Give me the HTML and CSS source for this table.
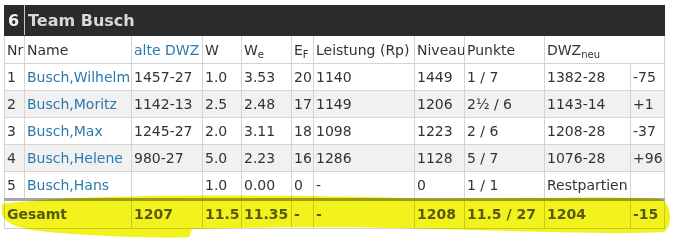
FILE: index.html
```html
<!DOCTYPE html>
<html lang="de">
<head>
<meta charset="utf-8">
<title>Team Busch</title>
<link rel="stylesheet" href="styles.css">
</head>
<body>
<div class="page">
  <table class="team">
    <colgroup>
      <col class="c-nr"><col class="c-name"><col class="c-dwz"><col class="c-w"><col class="c-we"><col class="c-ef"><col class="c-leis"><col class="c-niv"><col class="c-pkt"><col class="c-neu"><col class="c-diff">
    </colgroup>
    <thead>
      <tr class="title">
        <th class="t-nr">6</th>
        <th class="t-name" colspan="10">Team Busch</th>
      </tr>
      <tr class="head">
        <th>Nr</th><th>Name</th><th><a href="#">alte DWZ</a></th><th>W</th><th>W<sub>e</sub></th><th>E<sub>F</sub></th><th>Leistung (Rp)</th><th>Niveau</th><th>Punkte</th><th colspan="2">DWZ<sub>neu</sub></th>
      </tr>
    </thead>
    <tbody>
      <tr><td>1</td><td><a href="#">Busch,Wilhelm</a></td><td>1457-27</td><td>1.0</td><td>3.53</td><td>20</td><td>1140</td><td>1449</td><td>1 / 7</td><td>1382-28</td><td>-75</td></tr>
      <tr class="alt"><td>2</td><td><a href="#">Busch,Moritz</a></td><td>1142-13</td><td>2.5</td><td>2.48</td><td>17</td><td>1149</td><td>1206</td><td>2½ / 6</td><td>1143-14</td><td>+1</td></tr>
      <tr><td>3</td><td><a href="#">Busch,Max</a></td><td>1245-27</td><td>2.0</td><td>3.11</td><td>18</td><td>1098</td><td>1223</td><td>2 / 6</td><td>1208-28</td><td>-37</td></tr>
      <tr class="alt"><td>4</td><td><a href="#">Busch,Helene</a></td><td>980-27</td><td>5.0</td><td>2.23</td><td>16</td><td>1286</td><td>1128</td><td>5 / 7</td><td>1076-28</td><td>+96</td></tr>
      <tr><td>5</td><td><a href="#">Busch,Hans</a></td><td></td><td>1.0</td><td>0.00</td><td>0</td><td>-</td><td>0</td><td>1 / 1</td><td>Restpartien</td><td></td></tr>
    </tbody>
    <tfoot>
      <tr class="total"><td colspan="2">Gesamt</td><td>1207</td><td>11.5</td><td>11.35</td><td>-</td><td>-</td><td>1208</td><td>11.5 / 27</td><td>1204</td><td>-15</td></tr>
    </tfoot>
  </table>
  <svg class="marker" width="673" height="245" viewBox="0 0 673 245" aria-hidden="true">
    <path d="M 2 204 C 60 196, 200 193, 400 198 C 500 200, 600 195, 660 199 C 672 202, 673 226, 664 232 C 600 235, 500 230, 400 228 C 300 226, 230 228, 192 229 L 189 237 C 170 239, 80 236, 40 231 C 15 228, 4 222, 2 214 Z" fill="#f2f21c"/>
  </svg>
</div>
</body>
</html>
```
FILE: styles.css
```css
html, body {
  margin: 0;
  padding: 0;
  background: #ffffff;
}

.page {
  position: relative;
  width: 673px;
  height: 245px;
  padding: 5px 0 0 4px;
  box-sizing: border-box;
  font-family: "DejaVu Sans", Verdana, sans-serif;
  font-size: 14px;
  color: #333333;
}

.team {
  border-collapse: collapse;
  table-layout: fixed;
  width: 660px;
}

.c-nr { width: 20px; }
.c-name { width: 107px; }
.c-dwz { width: 71px; }
.c-w { width: 39px; }
.c-we { width: 50px; }
.c-ef { width: 22px; }
.c-leis { width: 101px; }
.c-niv { width: 50px; }
.c-pkt { width: 80px; }
.c-neu { width: 86px; }
.c-diff { width: 34px; }

.team th,
.team td {
  border: 1px solid #d4d4d4;
  padding: 5px 1px 5px 2px;
  line-height: 16px;
  text-align: left;
  font-weight: normal;
  white-space: nowrap;
  overflow: hidden;
  vertical-align: middle;
}

.team a {
  color: #2a7ab0;
  text-decoration: none;
}

.title th {
  background: #2b2b2b;
  border-color: #2b2b2b;
  font-size: 16px;
  font-weight: bold;
  line-height: 20px;
  padding: 5px 1px 4px 3px;
  color: #d8d8d8;
}

.title .t-nr {
  border-right-color: #c8c8c8;
  color: #f2f2f2;
}

.head th {
  padding: 6px 1px 5px 2px;
}

.team sub {
  font-size: 10px;
  line-height: 0;
  vertical-align: -3px;
}

.alt td {
  background: #f1f1f1;
}

.total td {
  border-top: 3px solid #a6a6a6;
  font-weight: bold;
  color: #5e5e5e;
  padding: 5px 1px 6px 2px;
}

.marker {
  position: absolute;
  top: 0;
  left: 0;
  pointer-events: none;
  mix-blend-mode: multiply;
}
```
